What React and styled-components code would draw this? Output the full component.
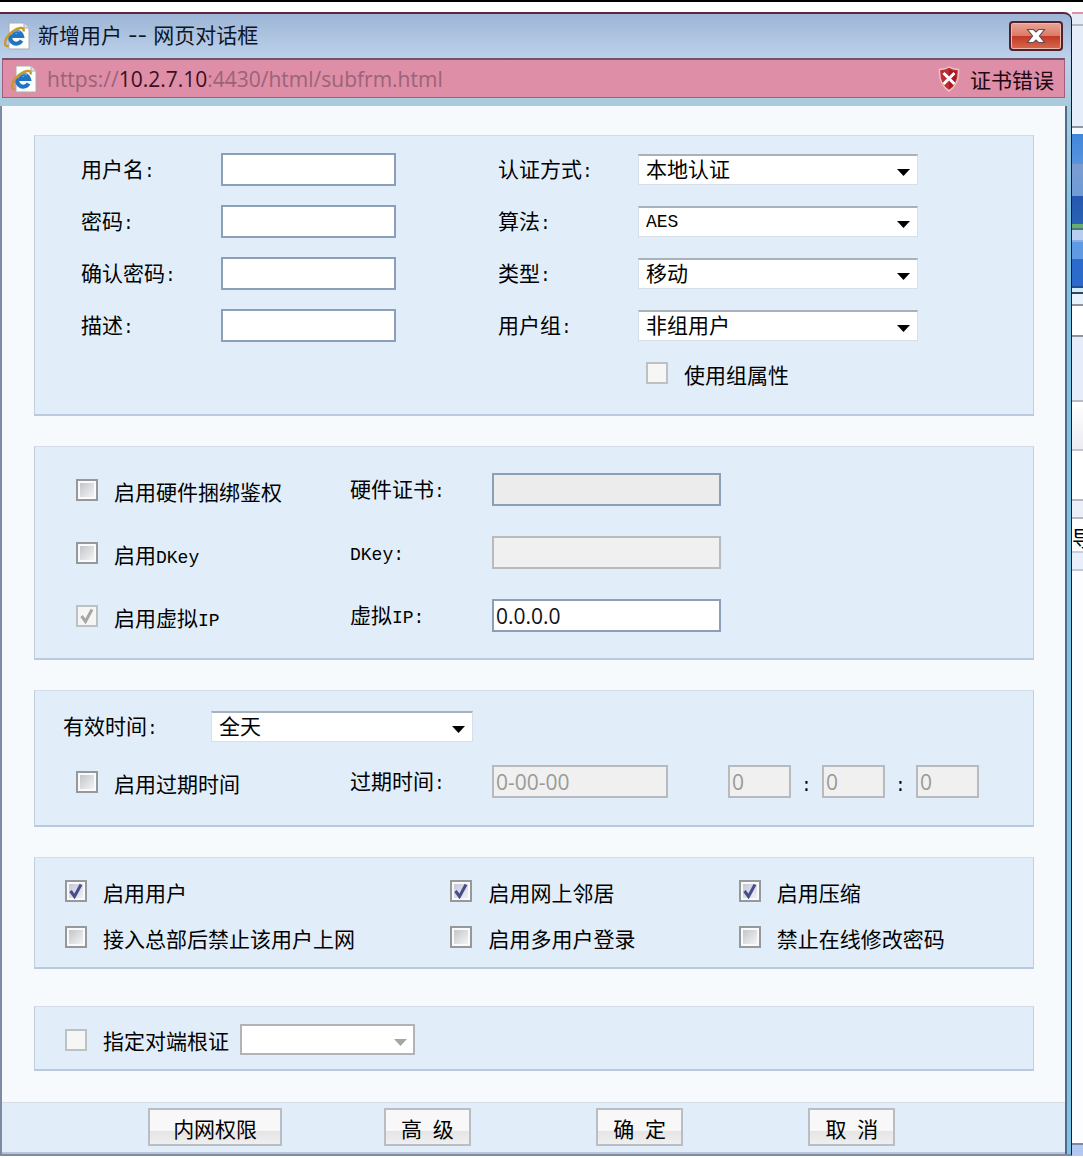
import React from 'react'
import styled, { createGlobalStyle, css } from 'styled-components'

const GlobalStyle = createGlobalStyle`
    * {
        box-sizing: border-box;
    }

    body {
        margin: 0;
        background: #fff;
        color: #000;
        font-family: 'Noto Sans CJK SC', sans-serif;
        font-size: 21px;
        line-height: 24px;
    }
`

const Desktop = styled.div`
    display: grid;
    grid-template-columns: minmax(0, 1fr) 11px;
    min-height: 100vh;
    padding: 10px 0 2px;
    border-top: 2px solid #000;
    overflow: hidden;
`

const Dialog = styled.main`
    display: flex;
    flex-direction: column;
    border-top: 2px solid #5e2440;
    border-right: 1px solid #101820;
    border-bottom: 2px solid #7f8ba3;
    border-top-right-radius: 8px;
    padding-right: 4px;
    background: linear-gradient(#9db5d6, #bcd1ea 44px, #a9cbdc 92px, #7cc4e4 200px);
`

const TitleBar = styled.header`
    display: flex;
    align-items: center;
    gap: 8px;
    height: 44px;
    padding: 0 4px 0 4px;
`

const Title = styled.h1`
    flex: 1;
    margin: 0;
    font-family: Inter, 'Noto Sans CJK SC', sans-serif;
    font-size: 21px;
    font-weight: 400;
    color: #0c1626;
`

const CloseButton = styled.button`
    display: flex;
    align-items: center;
    justify-content: center;
    width: 54px;
    height: 30px;
    padding: 0;
    border: 2px solid #54202c;
    border-radius: 4px;
    background: linear-gradient(#e8a596, #dc7a68 48%, #c23a26 52%, #d9694c);
    box-shadow: inset 0 0 0 1px #efb8ac;
`

const AddressBar = styled.div`
    display: flex;
    align-items: center;
    gap: 10px;
    height: 40px;
    margin: 0 2px;
    padding: 0 10px 0 8px;
    border: 1px solid #a05c78;
    border-top: 2px solid #74506c;
    background: #de8ea7;
`

const Url = styled.span`
    flex: 1;
    font-family: 'Open Sans', sans-serif;
    font-size: 21px;
    color: #9a6478;

    b {
        font-weight: 400;
        color: #3c1020;
    }
`

const CertError = styled.span`
    display: flex;
    align-items: center;
    gap: 10px;
    color: #200810;
`

const Content = styled.form`
    flex: 1;
    display: flex;
    flex-direction: column;
    margin-top: 8px;
    border-left: 2px solid #7c8ba4;
    border-right: 2px solid #4f6c90;
    background: #f6fafd;
`

const Groups = styled.div`
    flex: 1;
    display: flex;
    flex-direction: column;
    gap: 30px;
    padding: 29px 31px 30px 32px;
`

const Group = styled.section`
    border: 1px solid #c3cedc;
    border-top-color: #d3dce8;
    border-bottom: 2px solid #b9cadf;
    background: #e1eefa;
`

const AccountGroup = styled(Group)`
    display: grid;
    grid-template-columns: 417fr 535fr;
    padding: 17px 0 29px 46px;
`

const FieldColumn = styled.div`
    display: flex;
    flex-direction: column;
    gap: 19px;
`

const Field = styled.div`
    display: flex;
    align-items: center;
    height: 33px;
`

const Label = styled.label`
    flex: none;
    width: ${({ $width }) => $width}px;
    padding-bottom: 3px;
    white-space: nowrap;
`

// latin letters take half the width of a han character
const Half = styled.span`
    font-family: 'Liberation Mono', monospace;
    font-size: 18px;
    line-height: 0;
`

const TextBox = styled.input`
    width: ${({ $width }) => $width}px;
    height: 33px;
    padding: 0 2px;
    border: 2px solid #8c9fb8;
    border-radius: 0;
    background: #fff;
    color: #101018;
    font-family: 'Open Sans', sans-serif;
    font-size: 21px;

    &:disabled {
        border-color: #b7bbc0;
        background: #f0f0f0;
        color: #9a9a96;
    }

    &:read-only:enabled {
        background: #ececec;
    }
`

const SelectShell = styled.span`
    display: inline-grid;
    align-items: center;
    width: ${({ $width }) => $width}px;

    select,
    svg {
        grid-area: 1 / 1;
    }

    svg {
        justify-self: end;
        margin: 5px 8px 0 0;
        pointer-events: none;
    }
`

const SelectBox = styled.select`
    appearance: none;
    width: 100%;
    height: 31px;
    padding: 0 28px 4px 7px;
    border: 1px solid #d7dfe8;
    border-top: 2px solid #a9b1ba;
    border-radius: 0;
    background: #fff;
    color: #000;
    opacity: 1;
    font-family: 'Noto Sans CJK SC', sans-serif;
    font-size: 21px;
    line-height: 24px;

    ${({ $half }) => $half && css`
        padding-bottom: 0;
        font-family: 'Liberation Mono', monospace;
        font-size: 18px;
    `}

    &:disabled {
        border: 2px solid #b0b4b8;
    }
`

const CheckLabel = styled.label`
    display: flex;
    align-items: center;
    gap: 16px;
    height: ${({ $tall }) => ($tall ? 33 : 24)}px;
    padding-top: ${({ $tall }) => ($tall ? 1 : 0)}px;
    white-space: nowrap;
`

const CheckText = styled.span`
    padding-top: 1px;
`

const CheckShell = styled.span`
    flex: none;
    display: grid;
    place-items: center;

    input,
    svg {
        grid-area: 1 / 1;
    }

    svg {
        pointer-events: none;
    }
`

const CheckInput = styled.input`
    appearance: none;
    width: 22px;
    height: 22px;
    margin: 0;
    border: 2px solid #96999c;
    background: linear-gradient(135deg, #c2c5ca, #f4f4f4) content-box, #fafafa;
    padding: 2px;

    &:checked {
        background: linear-gradient(135deg, #c4c8da, #eef0f8) content-box, #fafafa;
    }

    &:disabled {
        border-color: #bcc1c4;
        background: #f6f7f5;
    }
`

const CheckSlot = styled.div`
    padding-left: 148px;
`

const BindingGroup = styled(Group)`
    display: grid;
    gap: 30px;
    padding: 26px 0 26px 41px;
`

const SplitRow = styled.div`
    display: grid;
    grid-template-columns: 274fr 683fr;
    align-items: center;
`

const TimeGroup = styled(Group)`
    display: grid;
    gap: 22px;
    padding: 19px 0 27px 41px;
`

const PeriodRow = styled(Field)`
    margin-left: -13px;
`

const Clock = styled.div`
    display: flex;
    align-items: center;
    margin-left: 60px;
`

const Colon = styled.span`
    width: 31px;
    text-align: center;
`

const OptionGroup = styled(Group)`
    display: grid;
    grid-template-columns: 385fr 288fr 294fr;
    row-gap: 22px;
    padding: 21px 0 18px 30px;
`

const RootCertGroup = styled(Group)`
    display: flex;
    align-items: center;
    gap: 11px;
    margin-top: 7px;
    padding: 17px 0 14px 30px;
`

const Footer = styled.footer`
    display: grid;
    grid-template-columns: repeat(4, 1fr);
    justify-items: center;
    padding: 5px 107px 6px;
    border-top: 1px solid #d6dfe8;
    border-bottom: 2px solid #b7c4d9;
    background: #e1edf9;
`

const PushButton = styled.button`
    height: 38px;
    padding: 2px ${({ $wide }) => ($wide ? 23 : 15)}px 0;
    border: 2px solid #b9bdc4;
    border-radius: 0;
    background: linear-gradient(#f8f8f8 60%, #e5e5e5 62%, #efefef);
    color: #000;
    font-family: 'Noto Sans CJK SC', sans-serif;
    font-size: 21px;
    line-height: 24px;
    white-space: pre;
`

const Behind = styled.div`
    display: flex;
    flex-direction: column;
    border-top: 2px solid #e092a4;
`

const Strip = styled.div`
    height: ${({ $height }) => ($height ? `${$height}px` : 'auto')};
    flex: ${({ $height }) => ($height ? 'none' : 1)};
    border-bottom: ${({ $line }) => ($line ? `2px solid ${$line}` : 'none')};
    background: ${({ $fill }) => $fill};
    line-height: 36px;
    overflow: hidden;
    white-space: nowrap;
`

const strips = [
    { height: 12, fill: '#e4ecf8', line: '#b4b8c4' },
    { height: 102, fill: '#e6edfa', line: '#8f95a2' },
    { height: 6, fill: '#f4faff' },
    { height: 30, fill: 'linear-gradient(#3f86dd, #5a94dc)' },
    { height: 32, fill: 'linear-gradient(#7b9cd0, #6f9bd8)' },
    { height: 28, fill: 'linear-gradient(#2558b0, #2a62b4)' },
    { height: 6, fill: '#69ad6c', line: '#4a7a78' },
    { height: 12, fill: '#b7cdf2', line: '#88aee4' },
    { height: 17, fill: '#5f9be4' },
    { height: 29, fill: '#2c6bcb', line: '#1f4f98' },
    { height: 6, fill: '#d4ebfa', line: '#30465e' },
    { height: 12, fill: '#e8f2fc', line: '#8f949c' },
    { height: 31, fill: '#fff', line: '#8f949c' },
    { height: 65, fill: '#e6ecfa', line: '#b8bcc8' },
    { height: 49, fill: 'linear-gradient(#fff, #ecebf2)', line: '#c4c4cc' },
    { height: 50, fill: '#fff', line: '#b4b8c6' },
    { height: 18, fill: '#eceef8', line: '#b4b8c6' },
    { height: 34, fill: '#fff', text: '导', line: '#c8ccd8' },
    { height: 18, fill: '#e8eefa', line: '#c0c8da' },
    { fill: '#fcfdff', line: '#7c88a8' },
    { height: 11, fill: '#b3c8f0' },
]

const BrowserIcon = () => (
    <svg width="26" height="28" viewBox="0 0 26 28" aria-hidden="true">
        <path d="M5 1h15l5 5v21H5z" fill="#fdfdfb" stroke="#a9adb4" />
        <path d="M20 1v5h5" fill="#dde1e8" stroke="#a9adb4" />
        <path d="M17.500 18.500a6 6 0 1 1 .5-4.500h-11" fill="none" stroke="#1f74c4" strokeWidth="4" />
        <path d="M7 13a6 6 0 0 1 9-3" fill="none" stroke="#58b4ea" strokeWidth="1.200" />
        <path d="M4.500 24C-1 25 0 17 7 11S21 4 19.500 9.500" fill="none" stroke="#c79a30" strokeWidth="2.400" />
    </svg>
)

const ShieldIcon = () => (
    <svg width="22" height="26" viewBox="0 0 22 26" aria-hidden="true">
        <path d="M11 1c3 2 6 2.500 9.500 2.500C21 13 19 20 11 25 3 20 1 13 1.500 3.500 5 3.500 8 3 11 1z" fill="#c02c36" stroke="#e8c8c8" strokeWidth="1.500" />
        <path d="M11 3v20c6-4 7.500-10 7.500-17.500C15.500 5 13 4.500 11 3z" fill="#a61824" />
        <path d="M5.500 7l11 11M16.500 7l-11 11" stroke="#fff" strokeWidth="3" />
    </svg>
)

const Select = ({ id, label, width, options, half, disabled }) => (
    <SelectShell $width={width}>
        <SelectBox id={id} aria-label={label} $half={half} disabled={disabled}>
            {options.map(option => <option key={option}>{option}</option>)}
        </SelectBox>
        <svg width="13" height="7" viewBox="0 0 13 7" aria-hidden="true">
            <path d="M0 0h13L6.500 7z" fill={disabled ? '#a4a6a4' : '#000'} />
        </svg>
    </SelectShell>
)

const Check = ({ children, checked, disabled, tall }) => (
    <CheckLabel $tall={tall}>
        <CheckShell>
            <CheckInput type="checkbox" defaultChecked={checked} disabled={disabled} />
            {checked && (
                <svg width="14" height="16" viewBox="0 0 14 16" aria-hidden="true">
                    <path d="M1.500 8l4 5.500L12 1.500" fill="none" stroke={disabled ? '#a6a6a2' : '#484e86'} strokeWidth="3" />
                </svg>
            )}
        </CheckShell>
        <CheckText>{children}</CheckText>
    </CheckLabel>
)

const App = () => (
    <>
        <GlobalStyle />
        <Desktop>
            <Dialog>
                <TitleBar>
                    <BrowserIcon />
                    <Title>新增用户 -- 网页对话框</Title>
                    <CloseButton type="button" aria-label="关闭">
                        <svg width="22" height="16" viewBox="0 0 20 16" aria-hidden="true">
                            <path d="M1.500 1.500h6L10 4l2.500-2.500h6L13.500 8l5 6.500h-6L10 12l-2.500 2.500h-6L6.500 8z" fill="#fff" stroke="#6c4c54" strokeWidth="1.200" />
                        </svg>
                    </CloseButton>
                </TitleBar>
                <AddressBar>
                    <BrowserIcon />
                    <Url>https://<b>10.2.7.10</b>:4430/html/subfrm.html</Url>
                    <CertError><ShieldIcon />证书错误</CertError>
                </AddressBar>
                <Content>
                    <Groups>
                        <AccountGroup>
                            <FieldColumn>
                                <Field>
                                    <Label htmlFor="name" $width={140}>用户名<Half>:</Half></Label>
                                    <TextBox id="name" $width={175} />
                                </Field>
                                <Field>
                                    <Label htmlFor="password" $width={140}>密码<Half>:</Half></Label>
                                    <TextBox id="password" type="password" $width={175} />
                                </Field>
                                <Field>
                                    <Label htmlFor="confirm" $width={140}>确认密码<Half>:</Half></Label>
                                    <TextBox id="confirm" type="password" $width={175} />
                                </Field>
                                <Field>
                                    <Label htmlFor="description" $width={140}>描述<Half>:</Half></Label>
                                    <TextBox id="description" $width={175} />
                                </Field>
                            </FieldColumn>
                            <FieldColumn>
                                <Field>
                                    <Label htmlFor="auth" $width={140}>认证方式<Half>:</Half></Label>
                                    <Select id="auth" width={280} options={['本地认证']} />
                                </Field>
                                <Field>
                                    <Label htmlFor="algorithm" $width={140}>算法<Half>:</Half></Label>
                                    <Select id="algorithm" width={280} options={['AES']} half />
                                </Field>
                                <Field>
                                    <Label htmlFor="kind" $width={140}>类型<Half>:</Half></Label>
                                    <Select id="kind" width={280} options={['移动']} />
                                </Field>
                                <Field>
                                    <Label htmlFor="usergroup" $width={140}>用户组<Half>:</Half></Label>
                                    <Select id="usergroup" width={280} options={['非组用户']} />
                                </Field>
                                <CheckSlot>
                                    <Check disabled>使用组属性</Check>
                                </CheckSlot>
                            </FieldColumn>
                        </AccountGroup>

                        <BindingGroup>
                            <SplitRow>
                                <Check tall>启用硬件捆绑鉴权</Check>
                                <Field>
                                    <Label htmlFor="hardware" $width={142}>硬件证书<Half>:</Half></Label>
                                    <TextBox id="hardware" $width={229} readOnly />
                                </Field>
                            </SplitRow>
                            <SplitRow>
                                <Check tall>启用<Half>DKey</Half></Check>
                                <Field>
                                    <Label htmlFor="dkey" $width={142}><Half>DKey:</Half></Label>
                                    <TextBox id="dkey" $width={229} disabled />
                                </Field>
                            </SplitRow>
                            <SplitRow>
                                <Check tall checked disabled>启用虚拟<Half>IP</Half></Check>
                                <Field>
                                    <Label htmlFor="ip" $width={142}>虚拟<Half>IP:</Half></Label>
                                    <TextBox id="ip" $width={229} defaultValue="0.0.0.0" />
                                </Field>
                            </SplitRow>
                        </BindingGroup>

                        <TimeGroup>
                            <PeriodRow>
                                <Label htmlFor="period" $width={148}>有效时间<Half>:</Half></Label>
                                <Select id="period" width={262} options={['全天']} />
                            </PeriodRow>
                            <SplitRow>
                                <Check tall>启用过期时间</Check>
                                <Field>
                                    <Label htmlFor="expires" $width={142}>过期时间<Half>:</Half></Label>
                                    <TextBox id="expires" $width={176} defaultValue="0-00-00" disabled />
                                    <Clock>
                                        <TextBox aria-label="时" $width={63} defaultValue="0" disabled />
                                        <Colon><Half>:</Half></Colon>
                                        <TextBox aria-label="分" $width={63} defaultValue="0" disabled />
                                        <Colon><Half>:</Half></Colon>
                                        <TextBox aria-label="秒" $width={63} defaultValue="0" disabled />
                                    </Clock>
                                </Field>
                            </SplitRow>
                        </TimeGroup>

                        <OptionGroup>
                            <Check checked>启用用户</Check>
                            <Check checked>启用网上邻居</Check>
                            <Check checked>启用压缩</Check>
                            <Check>接入总部后禁止该用户上网</Check>
                            <Check>启用多用户登录</Check>
                            <Check>禁止在线修改密码</Check>
                        </OptionGroup>

                        <RootCertGroup>
                            <Check disabled>指定对端根证</Check>
                            <Select label="对端根证" width={175} options={['']} disabled />
                        </RootCertGroup>
                    </Groups>
                    <Footer>
                        <PushButton type="button" $wide>内网权限</PushButton>
                        <PushButton type="button">高<Half> </Half>级</PushButton>
                        <PushButton type="button">确<Half> </Half>定</PushButton>
                        <PushButton type="button">取<Half> </Half>消</PushButton>
                    </Footer>
                </Content>
            </Dialog>
            <Behind aria-hidden="true">
                {strips.map(({ height, fill, line, text }, i) => (
                    <Strip key={i} $height={height} $fill={fill} $line={line}>{text}</Strip>
                ))}
            </Behind>
        </Desktop>
    </>
)

export default App
